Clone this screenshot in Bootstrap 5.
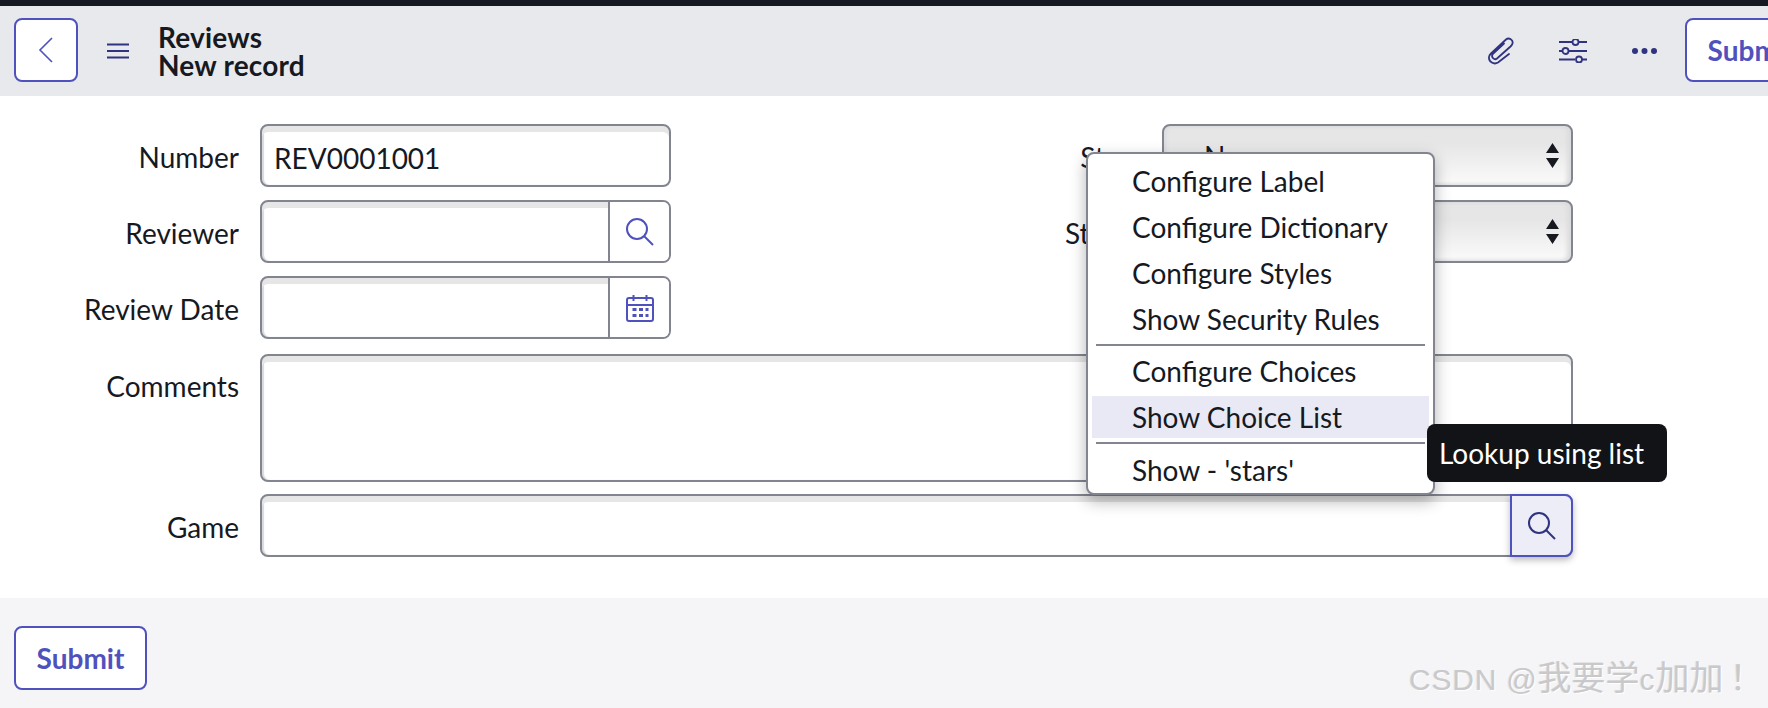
<!DOCTYPE html>
<html lang="en">
<head>
<meta charset="utf-8">
<title>Reviews</title>
<link href="https://cdn.jsdelivr.net/npm/bootstrap@5.3.0/dist/css/bootstrap.min.css" rel="stylesheet">
<style>
html,body{height:708px;overflow:hidden}
body{font-family:Lato,"Noto Sans CJK SC",sans-serif;font-size:28px;color:#16191f;background:#fff;position:relative;letter-spacing:0}
.topstrip{height:6px;background:#161824}
.headbar{height:90px;background:#e8e9ed;padding:0 0 0 14px}
.framebtn{border:2px solid #4f52bd;border-radius:8px;background:#fff;color:#4f52bd;height:64px;padding:0;display:flex;align-items:center;justify-content:center;flex:none}
.headbar .framebtn{margin-bottom:2px}
.backbtn{width:64px}
.burger{margin-left:29px;margin-right:29px;flex:none}
.headtitle{font-weight:700;font-size:28px;line-height:28px;letter-spacing:.2px}
.headtools{margin-right:-50px}
.submitbtn{font-weight:700;font-size:28px;width:133px;line-height:1}
.toolicon{display:block;flex:none}
.slidersicon{margin-left:43px}
.dotsicon{margin-left:45px}
.headsubmit{margin-left:28px}
.formarea{height:502px;padding-top:28px}
.formgrid{display:grid;grid-template-columns:671px 671px;column-gap:231px;row-gap:13px}
.wide{grid-column:1 / span 2;width:1573px}
.commentsrow{margin-top:2px}
.gamerow{margin-top:-1px}
.fieldrow{display:flex;align-items:flex-start}
.fieldlabel{width:239px;height:63px;margin-right:21px;text-align:right;line-height:67px;flex:none}
.fieldlabelwidehead{line-height:64px}
.shell{flex:1 1 auto;min-width:0;height:63px;border:2px solid #82858f;border-radius:8px;background:#fff;box-shadow:inset 0 6px 0 #e6e6e7,inset 2px 0 1px #d8d9dc;display:flex;overflow:hidden}
.shellarea{height:128px}
.shell input{flex:1 1 auto;min-width:0;border:0;outline:0;background:transparent;font-size:28px;color:#16191f;padding:4px 10px 0 12px;line-height:1;height:100%}
.addon{width:61px;flex:none;border:0;border-left:2px solid #82858f;background:#fff;display:flex;align-items:center;justify-content:center;padding:0}
.shellpick{position:relative;overflow:visible}
.addonhot{position:absolute;right:-2px;top:-2px;bottom:-2px;width:63px;height:63px;background:#ecedf6;border:2px solid #4f52bd;border-radius:0 8px 8px 0;box-shadow:0 3px 7px rgba(0,0,0,.28)}
.picker{appearance:none;height:63px;width:411px;border:2px solid #82858f;border-radius:8px;font-size:28px;color:#16191f;padding:0 12px;background-color:#fff;background-image:url("data:image/svg+xml,%3Csvg xmlns='http://www.w3.org/2000/svg' width='13' height='25'%3E%3Cpath d='M6.500 0l6.500 10H0zM0 15h13l-6.500 10z' fill='%2316191f'/%3E%3C/svg%3E"),linear-gradient(#e6e6e7,#e6e6e7 30%,#fbfbfb 100%);background-repeat:no-repeat;background-position:right 12px center,0 0;background-size:13px 25px,100% 100%;box-shadow:inset 2px 0 4px #d8d9dc,inset -4px 0 4px #dcdcde}
.footbar{height:110px;background:#f5f5f7;padding:28px 14px 0}
.footbar .submitbtn{height:64px;padding:0}
.popmenu{position:absolute;left:1086px;top:152px;width:349px;height:343px;background:#fff;border:2px solid #82858f;border-radius:8px;box-shadow:0 6px 16px rgba(0,0,0,.3);padding:4px 4px;margin:0;list-style:none}
.popmenu li{height:46px;line-height:46px;padding-left:40px;font-size:28px;white-space:nowrap}
.popmenu li.tallitem{height:47px;line-height:45px}
.popmenu li.hot{height:42px;line-height:43px;background:#e8e9f4}
.popmenu hr{margin:0 4px;border:0;border-top:2px solid #82858f;opacity:1}
.sep1{margin:2px 4px 3px!important}
.sep2{margin:4px 4px 3px!important}
.tipbox{position:absolute;left:1427px;top:424px;width:240px;height:58px;background:#121317;color:#fff;border-radius:8px;line-height:58px;padding-left:12px;font-size:28px}
.watermark{position:absolute;left:1409px;top:658px;font-family:"Liberation Sans","Noto Sans CJK SC",sans-serif;font-size:30px;color:#c9c9cb;text-shadow:1px 1px 1px #fff,-1px 0 0 #e5e5e5;line-height:40px;white-space:nowrap;letter-spacing:.8px}
.wmcjk{font-size:34px;letter-spacing:0}
.wmbang{margin-left:6px}
</style>
</head>
<body>
<div class="topstrip"></div>
<header class="headbar d-flex align-items-center">
  <button class="framebtn backbtn" aria-label="Back">
    <svg width="18" height="30" viewBox="0 0 18 30" fill="none" stroke="#4f52bd" stroke-width="1.600"><path d="M15 3 3 15l12 12"/></svg>
  </button>
  <svg class="burger" width="22" height="16" viewBox="0 0 22 16" stroke="#30337f" stroke-width="2"><path d="M0 1.500h22M0 8h22M0 14.500h22"/></svg>
  <div class="headtitle">Reviews<br>New record</div>
  <div class="headtools ms-auto d-flex align-items-center">
    <svg class="toolicon" width="28" height="28" viewBox="0 0 28 28" fill="none" stroke="#30337f" stroke-width="1.800" stroke-linecap="round"><path d="M21 17 10 25.500C6 28 .5 25 1 20 1.200 18.500 2 17.500 3 16.500L18 2.500C21 0 25.500 3 24.500 6.500 24.200 7.500 23.500 8.500 22.500 9.500L9 21.500C6.500 23.500 3 20.500 4.500 17.500 4.800 17 5.200 16.500 5.800 16L16 6.500"/></svg>
    <svg class="toolicon slidersicon" width="28" height="24" viewBox="0 0 28 24" fill="none" stroke="#30337f" stroke-width="1.800"><path d="M0 3h13m7 0h8M0 12h3m7 0h18M0 20.500h16m7 0h5"/><circle cx="16.500" cy="3" r="3"/><circle cx="6.500" cy="12" r="3"/><circle cx="20" cy="20.500" r="3"/></svg>
    <svg class="toolicon dotsicon" width="25" height="8" viewBox="0 0 25 8" fill="#30337f"><circle cx="3" cy="4" r="3"/><circle cx="12.500" cy="4" r="3"/><circle cx="22" cy="4" r="3"/></svg>
    <button class="framebtn submitbtn headsubmit">Submit</button>
  </div>
</header>
<main class="formarea">
  <form class="formgrid">
    <div class="fieldrow"><label class="fieldlabel">Number</label><div class="shell"><input type="text" value="REV0001001" aria-label="Number"></div></div>
    <div class="fieldrow"><label class="fieldlabel">Stars</label><select class="picker" aria-label="Stars"><option>-- None --</option></select></div>
    <div class="fieldrow"><label class="fieldlabel">Reviewer</label><div class="shell"><input type="text" aria-label="Reviewer"><button type="button" class="addon" aria-label="Search">
      <svg width="30" height="30" viewBox="0 0 30 30" fill="none" stroke="#4f52bd" stroke-width="2"><circle cx="12" cy="12" r="10"/><path d="m19 19 9 9"/></svg></button></div></div>
    <div class="fieldrow"><label class="fieldlabel">Status</label><select class="picker" aria-label="Status"><option></option></select></div>
    <div class="fieldrow"><label class="fieldlabel">Review Date</label><div class="shell"><input type="text" aria-label="Review Date"><button type="button" class="addon" aria-label="Calendar">
      <svg width="28" height="28" viewBox="0 0 28 28" fill="none" stroke="#4f52bd" stroke-width="2"><rect x="1" y="4" width="26" height="23" rx="2"/><path d="M1 11h26M7.500 1v6M20.500 1v6"/><path stroke-width="3" stroke-dasharray="4 2.500" d="M6.500 15.500h16M6.500 21.500h16"/></svg></button></div></div>
    <div></div>
    <div class="fieldrow wide commentsrow"><label class="fieldlabel fieldlabelwidehead">Comments</label><div class="shell shellarea"></div></div>
    <div class="fieldrow wide gamerow"><label class="fieldlabel">Game</label><div class="shell shellpick"><input type="text" aria-label="Game"><button type="button" class="addon addonhot" aria-label="Lookup using list">
      <svg width="30" height="30" viewBox="0 0 30 30" fill="none" stroke="#30337f" stroke-width="2"><circle cx="12" cy="12" r="10"/><path d="m19 19 9 9"/></svg></button></div></div>
  </form>
</main>
<footer class="footbar"><button class="framebtn submitbtn">Submit</button></footer>

<ul class="popmenu">
  <li>Configure Label</li>
  <li>Configure Dictionary</li>
  <li>Configure Styles</li>
  <li>Show Security Rules</li>
  <hr class="sep1">
  <li class="tallitem">Configure Choices</li>
  <li class="hot">Show Choice List</li>
  <hr class="sep2">
  <li>Show - 'stars'</li>
</ul>
<div class="tipbox">Lookup using list</div>
<div class="watermark">CSDN @<span class="wmcjk">我要学</span>c<span class="wmcjk">加加<span class="wmbang">！</span></span></div>
<script src="https://cdn.jsdelivr.net/npm/bootstrap@5.3.0/dist/js/bootstrap.bundle.min.js"></script>
</body>
</html>
